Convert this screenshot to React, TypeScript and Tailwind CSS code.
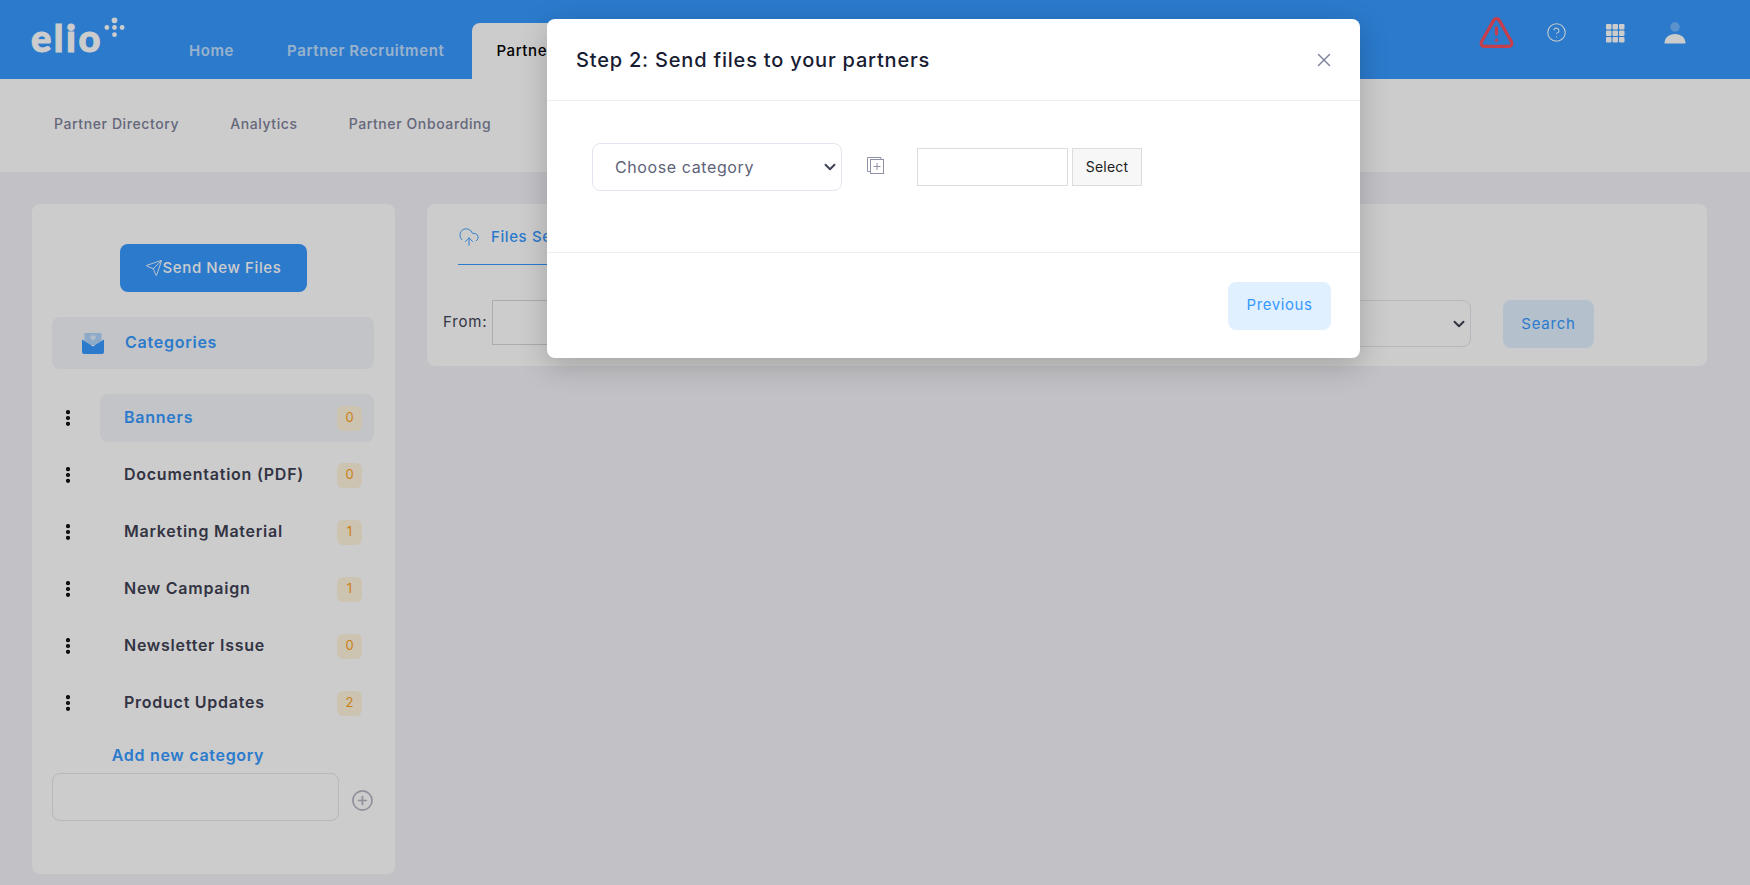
import { ChevronDown, CircleHelp, CirclePlus, CloudUpload, EllipsisVertical, Send, TriangleAlert, X } from "lucide-react";

const SUBNAV = ["Partner Directory", "Analytics", "Partner Onboarding"];

const CATEGORIES = [
  { name: "Banners", count: 0, active: true },
  { name: "Documentation (PDF)", count: 0 },
  { name: "Marketing Material", count: 1 },
  { name: "New Campaign", count: 1 },
  { name: "Newsletter Issue", count: 0 },
  { name: "Product Updates", count: 2 },
];

function LogoDots() {
  return (
    <svg width="21" height="21" viewBox="0 0 22 22" className="mb-[20px] ml-[1px] fill-white">
      <circle cx="11" cy="3.5" r="3" />
      <circle cx="3" cy="11" r="2.5" />
      <circle cx="11" cy="11" r="2.5" />
      <circle cx="19" cy="11" r="2.5" />
      <circle cx="11" cy="18.5" r="2.5" />
    </svg>
  );
}

function GridIcon() {
  const cells = [0, 6.5, 13];
  return (
    <svg width="19" height="19" viewBox="0 0 19 19" className="fill-white">
      {cells.map((y) => cells.map((x) => <rect key={`${x}-${y}`} x={x} y={y} width="5.5" height="5.5" rx="1" />))}
    </svg>
  );
}

function UserIcon() {
  return (
    <svg width="22" height="22" viewBox="0 0 22 22" className="fill-white">
      <circle cx="11" cy="5" r="4.7" fillOpacity="0.3" />
      <path d="M0.5 21.5C0.5 15.5 5 12 11 12s10.500 3.500 10.500 9.500z" />
    </svg>
  );
}

function MailIcon() {
  return (
    <svg width="22" height="21" viewBox="0 0 22 21">
      <rect x="2.500" y="0" width="17" height="12" fill="#3699ff" fillOpacity="0.35" />
      <path d="M11 2.800c-1-1.300-3-.5-3 1 0 1.500 2 3 3 3.700 1-.7 3-2.200 3-3.700 0-1.500-2-2.300-3-1z" fill="#ffffff" fillOpacity="0.6" />
      <path d="M0 6.500l11 7 11-7V19a2 2 0 0 1-2 2H2a2 2 0 0 1-2-2z" fill="#3699ff" />
    </svg>
  );
}

function AddFileIcon() {
  return (
    <svg width="17" height="17" viewBox="0 0 17 17" fill="none" stroke="#8f92a6" strokeWidth="1" className="ml-[25px] mb-[3px]">
      <path d="M3.500 14.500H.5V.5H14V2.500" />
      <rect x="3.500" y="2.500" width="13" height="14" />
      <path d="M10 6v7M6.500 9.500h7" />
    </svg>
  );
}

function CategoryRow({ name, count, active }: { name: string; count: number; active?: boolean }) {
  return (
    <div className="flex h-[48px] items-center">
      <div className="flex w-[48px] justify-start pl-[6px]">
        <EllipsisVertical size={20} strokeWidth={3} className="text-black" />
      </div>
      <div className={`flex h-[48px] flex-1 items-center justify-between rounded-lg pl-[24px] pr-[12px] ${active ? "bg-[#f3f6f9]" : ""}`}>
        <span className={`pb-[2px] text-[16px] font-semibold tracking-[0.75px] ${active ? "text-[#3699ff]" : "text-[#3f4254]"}`}>{name}</span>
        <span className="flex h-[25px] w-[25px] items-center justify-center rounded-md bg-[#fff4de] text-[13px] text-[#ff9f1a]">{count}</span>
      </div>
    </div>
  );
}

export default function App() {
  return (
    <div className="relative h-screen overflow-hidden bg-[#f3f3f8] font-['Inter',sans-serif]">
      <header className="flex h-[79px] items-end bg-[#3699ff] pl-[31px] pr-[64px]">
        <div className="flex h-[79px] w-[158px] items-center pb-[5px]">
          <span className="font-['Lato',sans-serif] text-[38px] font-black leading-none tracking-[2.500px] text-white [-webkit-text-stroke:1px_white]">elio</span>
          <LogoDots />
        </div>
        <nav className="flex items-end gap-[13px] text-[15px] tracking-[0.6px]">
          <a className="flex h-[56px] items-center pr-[20px] font-semibold text-white/70">Home</a>
          <a className="flex h-[56px] items-center px-[20px] font-semibold text-white/70">Partner Recruitment</a>
          <a className="ml-[-5px] flex h-[56px] items-center rounded-t-lg bg-white px-[24px] font-medium text-black">Partner Marketing</a>
        </nav>
        <div className="ml-auto flex h-[79px] items-center pb-[14px]">
          <TriangleAlert size={37} strokeWidth={2.100} className="text-[#f64e60]" />
          <CircleHelp size={21} strokeWidth={1.200} className="ml-[31px] text-white" />
          <div className="ml-[39px] mt-[1px]"><GridIcon /></div>
          <div className="ml-[39px]"><UserIcon /></div>
        </div>
      </header>

      <div className="flex h-[93px] items-center gap-[51px] bg-white pb-[4px] pl-[54px] text-[14px] font-medium tracking-[0.6px] text-[#7e8299]">
        {SUBNAV.map((item) => (
          <a key={item}>{item}</a>
        ))}
      </div>

      <main className="flex items-start gap-[32px] pl-[32px] pr-[43px] pt-[32px]">
        <aside className="flex h-[670px] w-[363px] shrink-0 flex-col rounded-lg bg-white pl-[20px] pr-[21px] pt-[40px]">
          <button className="flex h-[48px] w-[187px] items-center justify-center self-center rounded-lg bg-[#3699ff] text-[15px] font-medium tracking-[0.6px] text-white">
            <Send size={18} strokeWidth={1.200} />
            Send New Files
          </button>
          <div className="mt-[25px] flex h-[52px] items-center rounded-lg bg-[#f3f6f9] pl-[30px]">
            <MailIcon />
            <span className="ml-[21px] pb-[2px] text-[16px] font-semibold tracking-[0.75px] text-[#3699ff]">Categories</span>
          </div>
          <div className="mt-[25px] flex flex-col gap-[9px]">
            {CATEGORIES.map((c) => (
              <CategoryRow key={c.name} {...c} />
            ))}
          </div>
          <div className="mt-[18px] w-[272px] text-center text-[16px] font-semibold leading-[21px] tracking-[0.7px] text-[#3699ff]">Add new category</div>
          <div className="mt-[7px] flex items-center">
            <input className="h-[48px] w-[288px] rounded-lg border border-[#e4e6ef] bg-white" />
            <CirclePlus size={23} strokeWidth={1.800} className="ml-[12px] mt-[6px] text-[#b5b5c3]" />
          </div>
        </aside>

        <section className="h-[162px] flex-1 rounded-lg bg-white pl-[16px]">
          <div className="ml-[15px] flex h-[61px] w-[200px] items-center gap-[11px] border-b border-[#3699ff] pt-[6px]">
            <CloudUpload size={22} strokeWidth={1} className="text-[#3699ff]" />
            <span className="text-[15px] font-medium tracking-[0.6px] text-[#3699ff]">Files Sent</span>
          </div>
          <div className="mt-[35px] flex items-start">
            <label className="mt-[11px] text-[15px] tracking-[0.8px] text-[#3f4254]">From:</label>
            <input className="ml-[5px] h-[45px] w-[180px] border border-[#d8d8d8] bg-white" />
            <div className="relative ml-auto">
              <select className="h-[47px] w-[300px] appearance-none rounded-lg border border-[#e4e6ef] bg-white px-[16px] text-[#3f4254]">
                <option></option>
              </select>
              <ChevronDown size={18} strokeWidth={2.600} className="absolute right-[3px] top-[15px] text-[#3f4254]" />
            </div>
            <button className="ml-[32px] mr-[113px] h-[48px] w-[91px] rounded-lg bg-[#e1f0ff] text-[15px] tracking-[0.8px] text-[#3699ff]">Search</button>
          </div>
        </section>
      </main>

      <div className="absolute inset-0 bg-black/20" />

      <div className="absolute left-[547px] top-[19px] w-[813px] rounded-lg bg-white shadow-[0_8px_30px_rgba(0,0,0,0.2)]">
        <div className="flex h-[82px] items-center justify-between border-b border-[#ebedf3] pl-[29px] pr-[25px]">
          <h2 className="text-[20px] font-medium tracking-[0.8px] text-[#181c32]">Step 2: Send files to your partners</h2>
          <X size={22} strokeWidth={1.500} className="text-[#7e8299]" />
        </div>
        <div className="flex h-[152px] items-center border-b border-[#ebedf3] pb-[20px] pl-[45px]">
          <div className="relative">
            <select className="h-[48px] w-[250px] appearance-none rounded-lg border border-[#e4e6ef] bg-white pl-[22px] pr-[8px] text-[16px] tracking-[0.6px] text-[#5e6278]">
              <option>Choose category</option>
            </select>
            <ChevronDown size={18} strokeWidth={2.600} className="absolute right-[3px] top-[15px] text-[#3f4254]" />
          </div>
          <AddFileIcon />
          <input className="ml-[33px] h-[38px] w-[151px] border border-[#dcdcdc] bg-white" />
          <button className="ml-[4px] h-[38px] w-[70px] border border-[#dcdcdc] bg-[#f7f7f7] text-[14px] tracking-[0.2px] text-[#212121]">Select</button>
        </div>
        <div className="flex h-[105px] items-center justify-end pr-[29px]">
          <button className="h-[48px] w-[103px] rounded-lg bg-[#e1f0ff] text-[15px] tracking-[0.6px] text-[#3699ff]">Previous</button>
        </div>
      </div>
    </div>
  );
}
